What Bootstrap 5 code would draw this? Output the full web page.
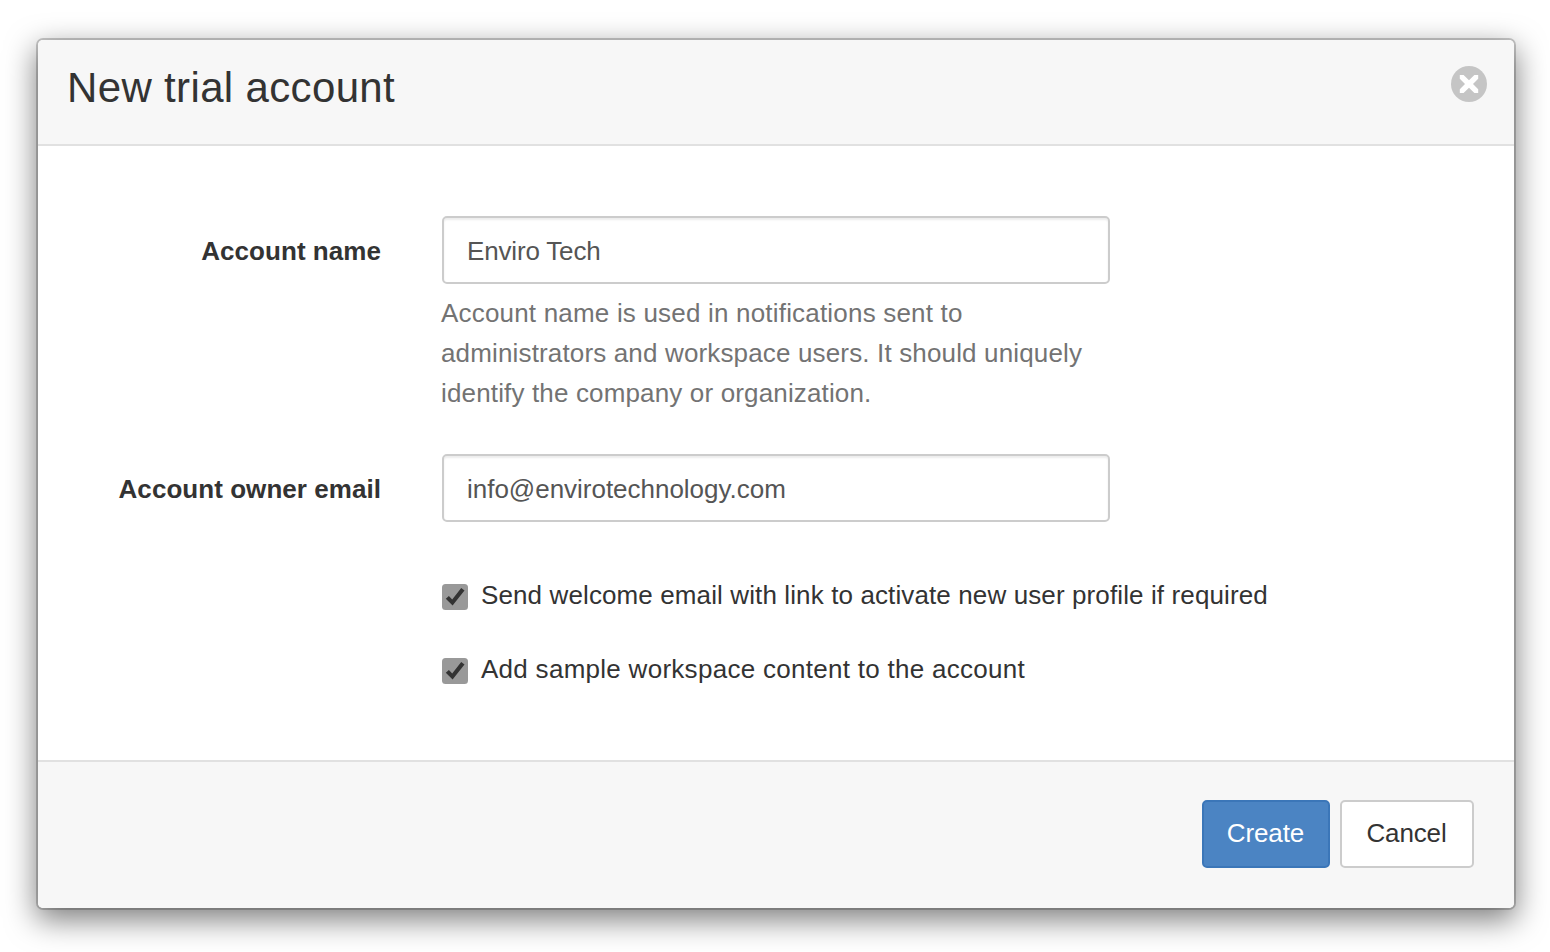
<!DOCTYPE html>
<html lang="en">
<head>
<meta charset="utf-8">
<title>New trial account</title>
<link href="https://cdn.jsdelivr.net/npm/bootstrap@5.3.0/dist/css/bootstrap.min.css" rel="stylesheet">
<style>
body{font-family:"Liberation Sans",Arial,sans-serif;font-size:26px;line-height:40px;color:#333;background:#fff;height:952px;padding:40px 36px 0 38px}
.trial-dialog{width:1476px;height:868px;border:0;border-radius:5px;box-shadow:0 0 0 2px rgba(0,0,0,.2),0 10px 30px 2px rgba(0,0,0,.5)}
.trial-head{height:106px;padding:18px 27px 0 29px;background:#f7f7f7;border-bottom:2px solid #e1e1e1;border-radius:5px 5px 0 0}
.trial-head h1{font-size:42px;line-height:60px;font-weight:400;letter-spacing:.35px}
.close-icon{width:36px;height:36px;margin-top:8px}
.trial-body{height:614px;padding:70px 40px 0}
.trial-foot{height:148px;padding:38px 40px 0;background:#f7f7f7;border-top:2px solid #e1e1e1;border-radius:0 0 5px 5px;gap:10px}
.field-row{gap:61px}
.field-label{flex:0 0 303px;line-height:40px;padding-top:15px;font-weight:700;letter-spacing:.05px}
.field-area{width:668px;margin-bottom:40px}
.field-input{height:68px;padding:12px 23px 10px;border:2px solid #ccc;border-radius:5px;font-size:26px;line-height:40px;color:#555;letter-spacing:-.02px;box-shadow:inset 0 2px 2px rgba(0,0,0,.075)}
#name{letter-spacing:-.17px}
.field-help{margin:9px 0 1px -1px;color:#737373;width:668px;letter-spacing:.15px}
.help-lead{letter-spacing:.19px}
.checks{margin:13px 0 0 364px;gap:34px}
.check-line{gap:13px}
.check-box{width:26px;height:26px;margin-top:9px}
.check-welcome{letter-spacing:.115px}
.check-sample{letter-spacing:.28px}
.act{height:68px;border:2px solid #ccc;border-radius:5px;font-size:26px;line-height:40px;padding:11px 1px 13px 0;letter-spacing:-.12px}
.act-create{width:128px;background:#4b84c3;border-color:#3b76b8;color:#fff}
.act-cancel{width:134px;background:#fff;color:#333}
</style>
<script src="https://cdn.jsdelivr.net/npm/bootstrap@5.3.0/dist/js/bootstrap.bundle.min.js"></script>
</head>
<body>
<svg class="d-none">
  <symbol id="tick" viewBox="0 0 26 26"><rect width="26" height="26" rx="3.5" fill="#999"/><path d="M3.8 14.8L6.9 11.9L10.2 15.6L19.2 4L22.5 6.6L10.6 21.6Z" fill="#333"/></symbol>
</svg>
<form class="modal-content trial-dialog">
  <div class="trial-head d-flex justify-content-between align-items-start">
    <h1 class="m-0">New trial account</h1>
    <button type="button" class="btn p-0 border-0 lh-1 d-flex" aria-label="Close"><svg class="close-icon" viewBox="0 0 36 36"><circle cx="18" cy="18" r="18" fill="#c5c5c5"/><path d="M8.8 9H12.6L18 14.2L23.4 9H27.2V12.8L22 18L27.2 23.2V27H23.4L18 21.8L12.6 27H8.8V23.2L14 18L8.8 12.8Z" fill="#fff"/></svg></button>
  </div>
  <div class="trial-body">
    <div class="field-row d-flex">
      <label class="field-label text-end" for="name">Account name</label>
      <div class="field-area">
        <input id="name" class="form-control field-input" value="Enviro Tech">
        <p class="field-help"><span class="help-lead">Account name is used in notifications sent to</span><br>administrators and workspace users. It should uniquely<br>identify the company or organization.</p>
      </div>
    </div>
    <div class="field-row d-flex">
      <label class="field-label text-end" for="mail">Account owner email</label>
      <div class="field-area"><input id="mail" class="form-control field-input" value="info@envirotechnology.com"></div>
    </div>
    <div class="checks d-flex flex-column">
      <div class="check-line d-flex align-items-start"><svg class="check-box"><use href="#tick"/></svg><span class="check-welcome">Send welcome email with link to activate new user profile if required</span></div>
      <div class="check-line d-flex align-items-start"><svg class="check-box"><use href="#tick"/></svg><span class="check-sample">Add sample workspace content to the account</span></div>
    </div>
  </div>
  <div class="trial-foot d-flex justify-content-end align-items-start">
    <button type="button" class="btn act act-create">Create</button>
    <button type="button" class="btn act act-cancel">Cancel</button>
  </div>
</form>
</body>
</html>
